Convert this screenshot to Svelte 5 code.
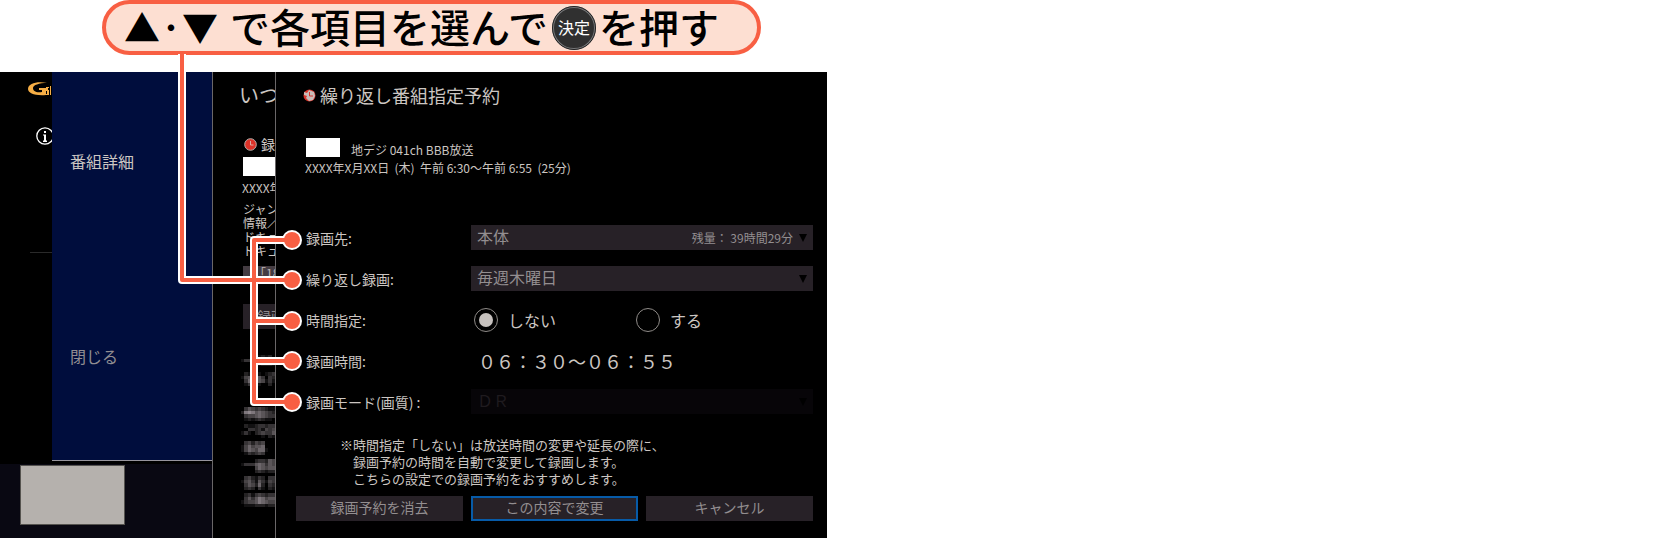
<script>
  let destination = $state('本体');
  let repeat = $state('毎週木曜日');
  let timing = $state('off');

  const notes = [
    '時間指定「しない」は放送時間の変更や延長の際に、',
    '録画予約の時間を自動で変更して録画します。',
    'こちらの設定での録画予約をおすすめします。'
  ];

  // Callout geometry: one dot per form row
  const dots = [240, 280, 321, 361, 402];
  const trunk = 'M182 54 V280 H292';
  const branches = 'M292 240 H254 V402 H292 M254 321 H292 M254 361 H292';

  // Brightness (0-9) of each cell in the obscured description
  const mosaic = [
    { y: 355, rows: ['0000012120', '1331123321', '0000012221'] },
    { y: 372, rows: ['0211210123', '1453153032', '0364254131', '0131010020'] },
    { y: 407, rows: ['0354343211', '2787565432', '0344565433', '0121232110'] },
    { y: 424, rows: ['0211233233', '0033231434', '1310234335', '0000001021'] },
    { y: 441, rows: ['0342434000', '1464556000', '1465466100', '0132343000'] },
    { y: 459, rows: ['0000233254', '1333565354', '0000465455', '0000232122'] },
    { y: 476, rows: ['0342132033', '1453153143', '0354262032', '0232031021'] },
    { y: 493, rows: ['0231343233', '0353576455', '1344576544', '0111222122'] }
  ];
</script>

<main>
  <h1 class="banner">
    <span class="keys"><span>▲</span><span>･</span><span>▼</span></span><span>で各項目を選んで</span><span class="ok">決定</span><span>を押す</span>
  </h1>

  <div class="screen">
    <div class="back">
      <div class="strip">
        <svg class="logo" width="25" height="14" viewBox="0 0 25 14" aria-hidden="true">
          <path d="M19 1C10-1 0 1 0 7c0 4 7 7 18 6V6h-7v2h3v2C8 11 5 9 5 6c0-3 6-5 14-5z" fill="#f6ae45" />
          <path d="M18 5h3v1h-1v2h1v5h-3v-1h1V9h-1V6zM22 4h1v9h-1zM24 4h1v9h-1z" fill="#f6ae45" />
        </svg>
        <svg class="info" width="18" height="18" viewBox="0 0 18 18" aria-hidden="true">
          <circle cx="9" cy="9" r="8.200" fill="none" stroke="#fff" stroke-width="1.3" />
          <path d="M8 4h2v2H8zM7 7.500h3v6h1V15H7v-1.500h1V8.500H7z" fill="#fff" />
        </svg>
        <hr />
      </div>
      <nav>
        <button class="detail">番組詳細</button>
        <button class="close">閉じる</button>
      </nav>
      <div class="preview"><div class="thumb"></div></div>
    </div>

    <div class="peek">
      <p class="peek-title">いつ</p>
      <p class="rec">
        <svg width="13" height="13" viewBox="0 0 13 13" aria-hidden="true">
          <circle cx="6.500" cy="6.500" r="5.800" fill="#dc3228" stroke="#b8b0ac" />
          <path d="M6.500 3V7H9.500" fill="none" stroke="#d8aaa4" />
        </svg>
        録画
      </p>
      <div class="blank"></div>
      <p class="date">XXXX年</p>
      <p class="genre">ジャン<br />情報／<br />ドキュ<br />ドキュ</p>
      <div class="tag">「18</div>
      <div class="peek-button">録画</div>
    </div>

    <section class="dialog">
      <h2>
        <svg width="13" height="13" viewBox="0 0 13 13" aria-hidden="true">
          <circle cx="6.500" cy="6.500" r="6" fill="#d9352c" />
          <path d="M1 3l3 1 2-3 5 2 1 4-2 4-4 1-3-3 1-2-3-1z" fill="#c9bcb8" />
          <path d="M6.500 3v4H10" fill="none" stroke="#d9352c" />
        </svg>
        繰り返し番組指定予約
      </h2>
      <div class="channel"><span class="blank"></span>地デジ 041ch BBB放送</div>
      <p class="when">XXXX年X月XX日&nbsp; (木)&nbsp; 午前 6:30～午前 6:55&nbsp; (25分)</p>

      <form onsubmit={(e) => e.preventDefault()}>
        <div class="row">
          <label for="destination">録画先:</label>
          <div class="field">
            <select id="destination" bind:value={destination}><option>本体</option></select>
            <span class="remain">残量：&nbsp;39時間29分</span>
            <svg class="arrow" width="8" height="8" viewBox="0 0 8 8" aria-hidden="true"><path d="M0 0h8L4 8z" /></svg>
          </div>
        </div>
        <div class="row">
          <label for="repeat">繰り返し録画:</label>
          <div class="field">
            <select id="repeat" bind:value={repeat}><option>毎週木曜日</option></select>
            <svg class="arrow" width="8" height="8" viewBox="0 0 8 8" aria-hidden="true"><path d="M0 0h8L4 8z" /></svg>
          </div>
        </div>
        <div class="row" role="radiogroup" aria-labelledby="timing">
          <span id="timing">時間指定:</span>
          <div class="radios">
            <label><input type="radio" name="timing" value="off" bind:group={timing} />しない</label>
            <label><input type="radio" name="timing" value="on" bind:group={timing} />する</label>
          </div>
        </div>
        <div class="row">
          <span>録画時間:</span>
          <output>０６：３０～０６：５５</output>
        </div>
        <div class="row">
          <label for="mode">録画モード(画質) :</label>
          <div class="field off">
            <select id="mode" disabled><option>ＤＲ</option></select>
            <svg class="arrow" width="8" height="8" viewBox="0 0 8 8" aria-hidden="true"><path d="M0 0h8L4 8z" /></svg>
          </div>
        </div>

        <div class="note">
          <span>※</span>
          <p>{#each notes as line}<span>{line}</span>{/each}</p>
        </div>

        <div class="actions">
          <button type="button">録画予約を消去</button>
          <button type="submit" class="focus">この内容で変更</button>
          <button type="button">キャンセル</button>
        </div>
      </form>
    </section>
  </div>

  <svg class="callout" width="827" height="538" viewBox="0 0 827 538" aria-hidden="true">
    <g shape-rendering="crispEdges">
      {#each mosaic as group}
        {#each group.rows as cells, r}
          {#each cells as level, c}
            <rect x={241 + c * 3.4} y={group.y + r * 3.5} width="3.4" height="3.5" fill="#b4aab0" fill-opacity={level / 10} />
          {/each}
        {/each}
      {/each}
    </g>
    <g fill="none" stroke-linejoin="round">
      <path d={trunk} stroke="#fff" stroke-width="8" />
      <path d={branches} stroke="#fff" stroke-width="8" />
      {#each dots as y}<circle cx="292" cy={y} r="10" fill="#fff" />{/each}
      <path d={trunk} stroke="#f85f43" stroke-width="4" />
      <path d={branches} stroke="#f85f43" stroke-width="4" />
    </g>
    {#each dots as y}<circle cx="292" cy={y} r="8" fill="#f85f43" />{/each}
  </svg>
</main>

<style>
  :global(body) {
    margin: 0;
    background: #fff;
  }
  main {
    position: relative;
    max-width: 827px;
    font-family: 'Noto Sans CJK JP', 'Noto Sans', sans-serif;
    font-weight: 400;
    color: #ccc6c2;
  }
  h1, h2, p { margin: 0; font-weight: inherit; }
  button, select {
    font: inherit;
    color: inherit;
    border: 0;
    padding: 0;
    border-radius: 0;
    background: none;
  }
  svg { display: block; flex: none; }

  .banner {
    box-sizing: border-box;
    display: flex;
    align-items: center;
    height: 55px;
    margin: 0 66px 17px 102px;
    padding: 0 18px;
    border: 4px solid #f85f43;
    border-radius: 28px;
    background: #fddfd2;
    color: #000;
    font-size: 40px;
    font-weight: 500;
    line-height: 44px;
    white-space: nowrap;
  }
  .banner > span:not(.ok) { padding-bottom: 3px; }
  .keys {
    display: flex;
    gap: 2px;
    margin-right: 12px;
    font-size: 36px;
  }
  .ok {
    box-sizing: border-box;
    width: 44px;
    height: 44px;
    margin: 0 3px 0 4px;
    border: 2px solid #77787a;
    border-radius: 50%;
    background: #303030;
    outline: 1px solid #222;
    outline-offset: -1px;
    color: #fff;
    font-size: 16px;
    font-weight: 400;
    line-height: 39px;
    text-align: center;
  }

  .screen {
    display: flex;
    min-height: 466px;
    background: #000;
  }
  .back {
    display: grid;
    grid-template: 389px 1fr / 52px 160px;
    row-gap: 3px;
    border-right: 1px solid #6a6768;
  }
  .strip {
    overflow: hidden;
    padding: 10px 0 0 28px;
  }
  .info { margin: 31px 0 0 8px; }
  hr {
    height: 1px;
    margin: 107px 0 0 2px;
    border: 0;
    background: #2a2a2a;
  }
  nav {
    display: flex;
    flex-direction: column;
    align-items: flex-start;
    padding: 77px 18px 0;
    background: #000d3d;
    border-bottom: 1px solid #96949c;
    font-size: 16px;
    line-height: 24px;
  }
  .close {
    margin-top: 171px;
    color: #918d92;
  }
  .preview {
    grid-column: 1 / -1;
    padding: 1px 20px;
    background: #090812;
  }
  .thumb {
    box-sizing: border-box;
    width: 105px;
    height: 60px;
    border: 1px solid #55534f;
    background: #b5b1ad;
  }

  .peek {
    box-sizing: border-box;
    width: 63px;
    padding: 9px 0 0 30px;
    overflow: hidden;
    border-right: 1px solid #6a6768;
    white-space: nowrap;
    font-size: 12px;
    line-height: 14px;
  }
  .peek-title { margin-left: -4px; font-size: 20px; line-height: 28px; }
  .rec {
    display: flex;
    align-items: center;
    gap: 4px;
    margin: 27px 0 5px 1px;
    font-size: 14px;
    line-height: 16px;
  }
  .blank {
    flex: none;
    width: 34px;
    height: 19px;
    background: #fff;
  }
  .date { margin: 5px 0 7px -1px; }
  .genre { font-size: 12px; }
  .tag {
    height: 13px;
    margin-top: 8px;
    padding-left: 11px;
    background: #443c42;
    color: #bbb5b5;
  }
  .peek-button {
    margin-top: 25px;
    padding-left: 14px;
    background: #272127;
    color: #8e898c;
    font-size: 14px;
    line-height: 25px;
  }

  .dialog {
    flex: 1;
    padding: 9px 14px 0 20px;
  }
  h2 {
    display: flex;
    align-items: center;
    gap: 4px;
    margin-left: 7px;
    font-size: 18px;
    line-height: 28px;
  }
  .channel {
    display: flex;
    gap: 11px;
    margin: 29px 0 0 10px;
    font-size: 12px;
    line-height: 24px;
  }
  .when {
    margin: -3px 0 0 9px;
    font-size: 12px;
    line-height: 18px;
  }
  form { margin-top: 48px; }
  .row {
    display: grid;
    grid-template-columns: 165px 1fr;
    align-items: center;
    height: 25px;
    margin: 0 0 16px 10px;
    font-size: 14px;
    line-height: 24px;
  }
  .field {
    display: grid;
    grid-template-columns: 1fr auto 20px;
    align-items: center;
    justify-items: start;
    background: #272127;
    color: #938e90;
  }
  .field > * { grid-row: 1; }
  .field select {
    grid-column: 1 / -1;
    width: 100%;
    height: 25px;
    padding: 0 0 2px 6px;
    appearance: none;
    font-size: 16px;
    line-height: 23px;
    opacity: 1;
  }
  .remain {
    grid-column: 2;
    font-size: 12px;
    pointer-events: none;
  }
  .arrow {
    grid-column: 3;
    margin-left: 6px;
    fill: #000;
    pointer-events: none;
  }
  .off {
    background: #070508;
    color: #1f1b1f;
  }
  .radios {
    display: grid;
    grid-template-columns: 162px auto;
    justify-content: start;
    padding-left: 3px;
  }
  .radios label {
    display: flex;
    align-items: center;
    gap: 10px;
    font-size: 16px;
  }
  input {
    box-sizing: border-box;
    width: 24px;
    height: 24px;
    margin: 0;
    border: 1px solid #8f8b88;
    border-radius: 50%;
    appearance: none;
  }
  input:checked {
    padding: 4px;
    background: #c6c1be content-box;
  }
  output {
    padding-left: 7px;
    font-size: 18px;
  }
  .note {
    display: flex;
    margin: 22px 0 9px 44px;
    font-size: 13px;
    line-height: 17px;
    white-space: nowrap;
  }
  .note p span { display: block; }
  .actions {
    display: grid;
    grid-template-columns: repeat(3, 1fr);
    gap: 8px;
  }
  .actions button {
    height: 25px;
    padding-bottom: 2px;
    background: #272127;
    color: #938e90;
    font-size: 14px;
    line-height: 23px;
  }
  .actions .focus {
    box-shadow: inset 0 0 0 2px #075ba8;
  }
  .callout {
    position: absolute;
    top: 0;
    left: 0;
    pointer-events: none;
  }
</style>
